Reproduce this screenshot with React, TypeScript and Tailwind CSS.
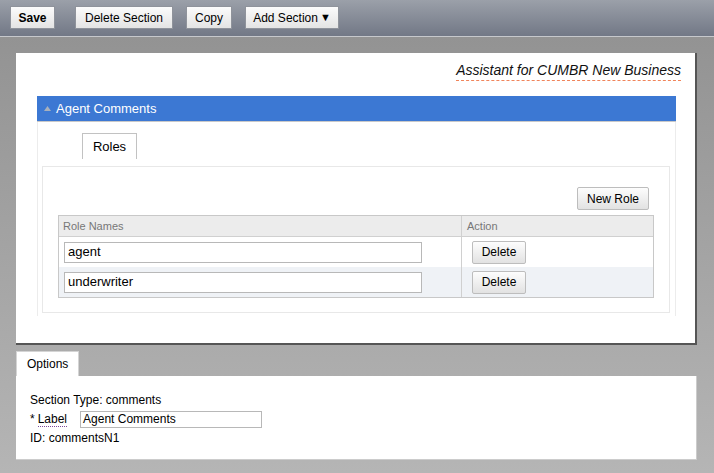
import React from 'react';

const font = { fontFamily: '"Liberation Sans", Arial, sans-serif' };

const roles = ['agent', 'underwriter'];

export default function App() {
  return (
    <div className="w-[714px] h-[473px] flex flex-col overflow-hidden text-black" style={font}>
      {/* toolbar */}
      <div className="h-[37px] shrink-0 flex items-start gap-[13px] pl-[10px] pt-[6px] bg-gradient-to-b from-[#9ba0a9] to-[#727886] border-b border-[#c6c8cc]">
        <ToolButton className="w-[45px] font-bold mr-[7px]">Save</ToolButton>
        <ToolButton className="w-[98px]">Delete Section</ToolButton>
        <ToolButton className="w-[46px]">Copy</ToolButton>
        <ToolButton className="w-[94px]">
          Add Section <span className="text-[11px] ml-[2px]">▼</span>
        </ToolButton>
      </div>

      {/* body */}
      <div className="flex-1 bg-gradient-to-b from-[#939393] to-[#b5b5b5] pl-[16px] pr-[17px] pt-[16px]">
        <div className="bg-white border-r-2 border-b-2 border-[#555555] h-[292px] pl-[21px] pr-[19px] pt-[9px]">
          <div className="flex justify-end mr-[-5px]">
            <span className="italic text-[14px] leading-[16px] text-[#111] border-b border-dashed border-[#f0845a] pb-[2px]">
              Assistant for CUMBR New Business
            </span>
          </div>

          <div className="mt-[15px] h-[26px] bg-[#3c78d3] border-b border-[#c9c9c9] flex items-center pl-[7px] text-white text-[13px]">
            <svg width="7" height="5" viewBox="0 0 7 5" className="mr-[5px] mt-[-1px]">
              <polygon points="3.5,0 7,5 0,5" fill="#a8b0bc" />
            </svg>
            Agent Comments
          </div>

          <div className="border-l border-r border-[#ececec] h-[194px] pt-[11px] pl-[4px] pr-[5px]">
            <div className="ml-[40px] w-[55px] h-[26px] border border-b-0 border-[#c2c2c2] flex items-center justify-center text-[13px]">
              Roles
            </div>
            <div className="mt-[7px] border border-[#e8e8e8] h-[147px] pl-[15px] pr-[15px] pt-[20px]">
              <div className="flex justify-end pr-[5px]">
                <Btn className="w-[72px] h-[23px]">New Role</Btn>
              </div>
              <div className="mt-[5px] border border-[#c8c8c8]">
                <div className="flex h-[21px] bg-[#ececec] border-b border-[#d0d0d0] text-[11px] text-[#777]">
                  <div className="w-[403px] border-r border-[#d0d0d0] pl-[4px] flex items-center">Role Names</div>
                  <div className="flex-1 pl-[5px] flex items-center">Action</div>
                </div>
                {roles.map((r, i) => (
                  <div key={r} className={`flex h-[30px] ${i % 2 ? 'bg-[#eff2f6]' : 'bg-white'}`}>
                    <div className="w-[403px] border-r border-[#d0d0d0] pl-[5px] flex items-center">
                      <div className="w-[358px] h-[21px] bg-white border border-[#b8b8b8] pl-[3px] text-[13px] flex items-center">
                        {r}
                      </div>
                    </div>
                    <div className="flex-1 pl-[10px] flex items-center">
                      <Btn className="w-[54px] h-[23px]">Delete</Btn>
                    </div>
                  </div>
                ))}
              </div>
            </div>
          </div>
        </div>

        {/* options */}
        <div className="mt-[6px] w-[63px] h-[25px] bg-white border-t border-l border-r border-[#d4d4d4] flex items-center pl-[10px] text-[12px]">
          Options
        </div>
        <div className="bg-white h-[84px] border-r border-b border-[#cccccc] pl-[14px] pt-[15px] text-[12px] leading-[19px]">
          <div>Section Type: comments</div>
          <div className="flex items-center">
            <span>* </span>
            <span className="ml-[3px] border-b border-dotted border-[#7a4a9a] leading-[13px]">Label</span>
            <div className="ml-[13px] w-[182px] h-[17px] border border-[#b8b8b8] pl-[2px] text-[12px] leading-[15px]">
              Agent Comments
            </div>
          </div>
          <div>ID: commentsN1</div>
        </div>
      </div>
    </div>
  );
}

function ToolButton({ children, className = '' }: any) {
  return (
    <button
      className={`h-[23px] text-[12px] flex items-center justify-center bg-gradient-to-b from-[#fbfbfb] to-[#e4e4e4] border border-[#8f939b] ${className}`}
      style={font}
    >
      {children}
    </button>
  );
}

function Btn({ children, className = '' }: any) {
  return (
    <button
      className={`text-[12px] flex items-center justify-center bg-gradient-to-b from-[#fdfdfd] to-[#e2e2e2] border border-[#bdbdbd] rounded-[2px] ${className}`}
      style={font}
    >
      {children}
    </button>
  );
}
